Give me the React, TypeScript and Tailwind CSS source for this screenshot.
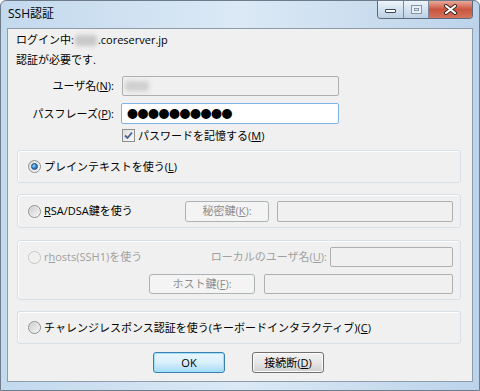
const FONT = '"Open Sans", "Noto Sans CJK JP", sans-serif';

const Radio = ({ checked = false, disabled = false }: { checked?: boolean; disabled?: boolean }) => (
  <span
    className={`flex h-[13px] w-[13px] shrink-0 items-center justify-center rounded-full border ${
      disabled ? 'border-[#c4c4c4] bg-[#f4f4f4]' : 'border-[#8e8f8f] bg-gradient-to-br from-[#d9d9d9] to-[#fbfbfb]'
    }`}
  >
    {checked ? (
      <span className="h-[7px] w-[7px] rounded-full border border-[#1c4a7a] bg-[radial-gradient(circle_at_35%_35%,#9fd7ff,#2a7fcc_55%,#164f8c)]" />
    ) : (
      <span className={`h-[9px] w-[9px] rounded-full ${disabled ? 'bg-[#f0f0f0]' : 'bg-gradient-to-br from-[#cfcfcf] to-[#f3f3f3]'}`} />
    )}
  </span>
);

const Checkbox = () => (
  <span className="flex h-[13px] w-[13px] shrink-0 items-center justify-center border border-[#8e8f8f] bg-gradient-to-br from-[#dcdcdc] to-[#fafafa]">
    <svg width="9" height="9" viewBox="0 0 9 9">
      <path d="M1 4.5 L3.5 7 L8 1.5" fill="none" stroke="#4b5e96" strokeWidth="1.8" />
    </svg>
  </span>
);

const Group = ({ className = '', children }: { className?: string; children: React.ReactNode }) => (
  <div className={`ml-[9px] w-[444px] rounded-[3px] border border-[#d5dfe5] shadow-[inset_1px_1px_0_#fff] ${className}`}>
    {children}
  </div>
);

const DisabledButton = ({ w, children }: { w: string; children: React.ReactNode }) => (
  <div className={`${w} flex h-[21px] items-center justify-center rounded-[3px] border border-[#adb2b5] bg-[#f4f4f4] text-[#8d8d8d]`}>
    {children}
  </div>
);

const DisabledInput = ({ w, h = 'h-[21px]' }: { w: string; h?: string }) => (
  <div className={`${w} ${h} rounded-[2px] border border-[#afafaf] bg-[#f0f0f0]`} />
);

export default function App() {
  return (
    <div
      className="flex h-[391px] w-[480px] flex-col overflow-hidden rounded-t-[6px] border border-[#6d7b8a] bg-gradient-to-r from-[#c3d9ee] via-[#dbe9f5] to-[#bcd3ea] text-[11px] text-black"
      style={{ fontFamily: FONT }}
    >
      {/* title bar */}
      <div className="flex h-[27px] shrink-0 items-start">
        <div className="pl-[7px] pt-[5px] text-[12px] leading-[16px] text-black">SSH認証</div>
        <div className="ml-auto mr-[6px] flex h-[18px] overflow-hidden rounded-b-[4px] border border-t-0 border-[#5d6b7a]">
          <div className="flex w-[26px] items-center justify-center border-r border-[#7c8b9a] bg-gradient-to-b from-[#eef4fa] via-[#d3e2f0] to-[#bcd0e4]">
            <span className="mt-[3px] h-[4px] w-[11px] rounded-[1px] border border-[#3a4450] bg-white" />
          </div>
          <div className="flex w-[25px] items-center justify-center border-r border-[#7c8b9a] bg-gradient-to-b from-[#eef4fa] via-[#d3e2f0] to-[#bcd0e4]">
            <span className="h-[9px] w-[11px] border border-[#8795a5] bg-[#e6eef6] shadow-[inset_0_0_0_2px_#e6eef6,inset_0_0_0_3px_#8795a5]" />
          </div>
          <div className="flex w-[43px] items-center justify-center bg-gradient-to-b from-[#e8a99b] via-[#c9553f] to-[#d4735d]">
            <svg width="15" height="11" viewBox="0 0 15 11">
              <path d="M3 2 L12 9 M12 2 L3 9" stroke="#3b2520" strokeWidth="4" strokeLinecap="round" />
              <path d="M3 2 L12 9 M12 2 L3 9" stroke="#fff" strokeWidth="2.2" strokeLinecap="round" />
            </svg>
          </div>
        </div>
      </div>

      {/* client area */}
      <div className="mx-[6px] mb-[8px] flex flex-1 flex-col border border-[#8e9cab] bg-[#f0f0f0] leading-[16px]">
        <div className="mt-[3px] flex h-[16px] items-center pl-[8px]">
          ログイン中:
          <span className="mx-[1px] h-[11px] w-[22px] rounded-[3px] bg-[#c8c8c8] blur-[2px]" />
          .coreserver.jp
        </div>
        <div className="mt-[4px] flex h-[16px] items-center pl-[8px]">認証が必要です.</div>

        <div className="mt-[8px] flex h-[20px] items-center">
          <div className="w-[106px] text-right">
            ユーザ名(<u>N</u>):
          </div>
          <div className="ml-[8px] flex h-[20px] w-[217px] items-center rounded-[2px] border border-[#afafaf] bg-[#f0f0f0] pl-[2px]">
            <span className="h-[10px] w-[24px] rounded-[3px] bg-[#cfcfcf] blur-[2px]" />
          </div>
        </div>

        <div className="mt-[7px] flex h-[21px] items-center">
          <div className="w-[106px] text-right">
            パスフレーズ(<u>P</u>):
          </div>
          <div className="ml-[7px] flex h-[21px] w-[218px] items-center rounded-[2px] border border-[#7eb4ea] bg-white pl-[5px] text-[11px] tracking-[-0.5px]">
            ●●●●●●●●●●
          </div>
        </div>

        <div className="mt-[5px] flex h-[13px] items-center pl-[114px]">
          <Checkbox />
          <span className="ml-[3px]">
            パスワードを記憶する(<u>M</u>)
          </span>
        </div>

        <Group className="mt-[8px] flex h-[33px] items-center pl-[10px]">
          <Radio checked />
          <span className="ml-[3px]">
            プレインテキストを使う(<u>L</u>)
          </span>
        </Group>

        <Group className="mt-[11px] flex h-[34px] items-center pl-[10px]">
          <div className="flex w-[157px] items-center">
            <Radio />
            <span className="ml-[3px]">
              <u>R</u>SA/DSA鍵を使う
            </span>
          </div>
          <DisabledButton w="w-[84px]">
            秘密鍵(<u>K</u>):
          </DisabledButton>
          <div className="ml-[8px]">
            <DisabledInput w="w-[176px]" />
          </div>
        </Group>

        <Group className="mt-[12px] flex h-[60px] flex-col pl-[10px] pr-[7px] pt-[6px] text-[#a0a0a0]">
          <div className="flex h-[20px] items-center">
            <Radio disabled />
            <span className="ml-[3px]">
              r<u>h</u>osts(SSH1)を使う
            </span>
            <span className="ml-auto">
              ローカルのユーザ名(<u>U</u>):
            </span>
            <div className="ml-[3px]">
              <DisabledInput w="w-[123px]" h="h-[20px]" />
            </div>
          </div>
          <div className="mt-[7px] flex h-[20px] items-center justify-end">
            <div className="flex h-[20px] w-[106px] items-center justify-center rounded-[3px] border border-[#adb2b5] bg-[#f4f4f4] text-[#8d8d8d]">
              ホスト鍵(<u>F</u>):
            </div>
            <div className="ml-[9px]">
              <DisabledInput w="w-[189px]" h="h-[20px]" />
            </div>
          </div>
        </Group>

        <Group className="mt-[11px] flex h-[33px] items-center pl-[10px]">
          <Radio />
          <span className="ml-[3px]">
            チャレンジレスポンス認証を使う(キーボードインタラクティブ)(<u>C</u>)
          </span>
        </Group>

        <div className="mt-[8px] flex h-[21px] pl-[145px]">
          <div className="flex h-[21px] w-[72px] items-center justify-center rounded-[3px] border border-[#3c7fb1] bg-gradient-to-b from-[#eaf6fd] via-[#d9f0fc] to-[#a7d9f5] shadow-[inset_0_0_0_1px_#9ce0fb]">
            OK
          </div>
          <div className="ml-[27px] flex h-[21px] w-[72px] items-center justify-center rounded-[3px] border border-[#707070] bg-gradient-to-b from-[#f2f2f2] via-[#e6e6e6] to-[#d0d0d0] shadow-[inset_0_0_0_1px_#fcfcfc]">
            接続断(<u>D</u>)
          </div>
        </div>
      </div>
    </div>
  );
}
